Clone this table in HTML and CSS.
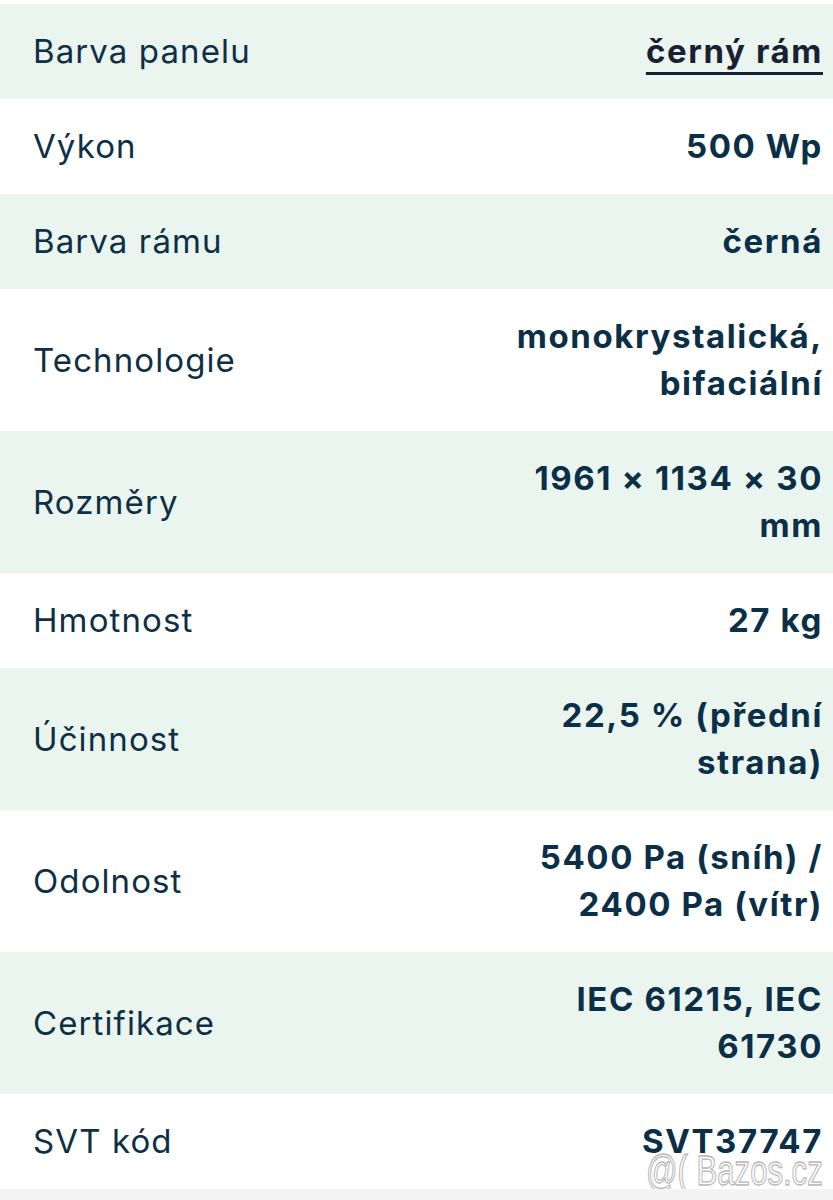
FILE: index.html
```html
<!DOCTYPE html>
<html lang="cs">
<head>
<meta charset="utf-8">
<title>Parametry panelu</title>
<link rel="stylesheet" href="styles.css">
</head>
<body>
<div class="page">
  <div class="specs">
    <div class="row"><div class="label">Barva panelu</div><div class="value"><a class="link" href="#">černý rám</a></div></div>
    <div class="row"><div class="label">Výkon</div><div class="value">500 Wp</div></div>
    <div class="row"><div class="label">Barva rámu</div><div class="value">černá</div></div>
    <div class="row"><div class="label">Technologie</div><div class="value">monokrystalická, bifaciální</div></div>
    <div class="row"><div class="label">Rozměry</div><div class="value">1961 × 1134 × 30 mm</div></div>
    <div class="row"><div class="label">Hmotnost</div><div class="value">27 kg</div></div>
    <div class="row"><div class="label">Účinnost</div><div class="value">22,5 % (přední strana)</div></div>
    <div class="row"><div class="label">Odolnost</div><div class="value">5400 Pa (sníh) / 2400 Pa (vítr)</div></div>
    <div class="row"><div class="label">Certifikace</div><div class="value">IEC 61215, IEC 61730</div></div>
    <div class="row"><div class="label">SVT kód</div><div class="value">SVT37747</div></div>
  </div>
  <div class="watermark">@( Bazos.cz</div>
</div>
</body>
</html>
```
FILE: styles.css
```css
html { background: #f3f3f3; }
body {
  margin: 0;
  font-family: "Inter", "Noto Sans", sans-serif;
  color: #0e2f45;
}
.page {
  position: relative;
  background: #ffffff;
  padding-top: 4px;
}
.specs {
  display: flex;
  flex-direction: column;
}
.row {
  display: flex;
  justify-content: space-between;
  align-items: center;
  gap: 24px;
  padding: 24px 10px 24px 33px;
  font-size: 33px;
  line-height: 47px;
}
.row:nth-child(odd) { background: #ebf5f0; }
.label { font-weight: 400; letter-spacing: 1.1px; }
.value {
  font-weight: 700;
  text-align: right;
  max-width: 314px;
  letter-spacing: 1.6px;
  color: #0b2f47;
}
.link {
  color: #1a1f33;
  text-decoration: underline;
  text-decoration-thickness: 3px;
  text-underline-offset: 9px;
}
.watermark {
  position: absolute;
  right: 10px;
  bottom: -3px;
  font-family: "Liberation Sans", Arial, sans-serif;
  font-size: 42px;
  line-height: 42px;
  color: transparent;
  -webkit-text-stroke: 1.3px #b8b8b8;
  transform: scaleX(0.74);
  transform-origin: right bottom;
}
```
